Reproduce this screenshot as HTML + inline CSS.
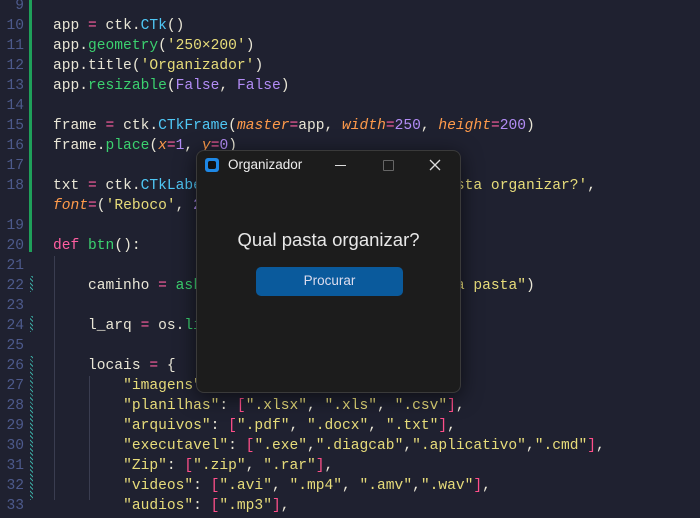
<!DOCTYPE html>
<html><head><meta charset="utf-8"><style>
html,body{margin:0;padding:0;width:700px;height:500px;overflow:hidden;background:#1f2130;}
.l{position:absolute;left:0;height:20px;line-height:20px;font:14.6px "Liberation Mono","DejaVu Sans Mono",monospace;color:#e9e6d6;white-space:pre;margin-top:4px;}
.n{position:absolute;left:0;width:24px;text-align:right;color:#4d5a8c;font-size:14.6px;}
.c{position:absolute;left:53px;}
.k{color:#ff5ea0}.f{color:#3bd16f}.cl{color:#4fc7f5}.p{color:#b28cf5}.o{color:#ff9a4a;font-style:italic}.s{color:#e7dc7a}.b{color:#ff4f8a}
.win{position:absolute;left:196px;top:150px;width:263px;height:241px;background:#1c1c1c;border:1px solid #3a3a3a;border-radius:8px;box-shadow:0 4px 20px rgba(0,0,0,.6);font-family:"Liberation Sans",sans-serif;}
</style></head><body>
<div style="position:absolute;left:29px;top:0;width:3px;height:252px;background:#1fa05a"></div>
<div style="position:absolute;left:30px;top:276px;width:3px;height:16px;background:repeating-linear-gradient(45deg,#3aa8a0 0 1px,transparent 1px 3px)"></div>
<div style="position:absolute;left:30px;top:316px;width:3px;height:16px;background:repeating-linear-gradient(45deg,#3aa8a0 0 1px,transparent 1px 3px)"></div>
<div style="position:absolute;left:30px;top:356px;width:3px;height:144px;background:repeating-linear-gradient(45deg,#3aa8a0 0 1px,transparent 1px 3px)"></div>
<div style="position:absolute;left:54px;top:256px;width:1px;height:244px;background:#3a3d50"></div>
<div style="position:absolute;left:89px;top:376px;width:1px;height:124px;background:#3a3d50"></div>

<div class="l" style="top:-6px"><span class="n">9</span></div>
<div class="l" style="top:14px"><span class="n">10</span><span class="c">app <span class="k">=</span> ctk.<span class="cl">CTk</span>()</span></div>
<div class="l" style="top:34px"><span class="n">11</span><span class="c">app.<span class="f">geometry</span>(<span class="s">'250×200'</span>)</span></div>
<div class="l" style="top:54px"><span class="n">12</span><span class="c">app.title(<span class="s">'Organizador'</span>)</span></div>
<div class="l" style="top:74px"><span class="n">13</span><span class="c">app.<span class="f">resizable</span>(<span class="p">False</span>, <span class="p">False</span>)</span></div>
<div class="l" style="top:94px"><span class="n">14</span></div>
<div class="l" style="top:114px"><span class="n">15</span><span class="c">frame <span class="k">=</span> ctk.<span class="cl">CTkFrame</span>(<span class="o">master</span><span class="k">=</span>app, <span class="o">width</span><span class="k">=</span><span class="p">250</span>, <span class="o">height</span><span class="k">=</span><span class="p">200</span>)</span></div>
<div class="l" style="top:134px"><span class="n">16</span><span class="c">frame.<span class="f">place</span>(<span class="o">x</span><span class="k">=</span><span class="p">1</span>, <span class="o">y</span><span class="k">=</span><span class="p">0</span>)</span></div>
<div class="l" style="top:154px"><span class="n">17</span></div>
<div class="l" style="top:174px"><span class="n">18</span><span class="c">txt <span class="k">=</span> ctk.<span class="cl">CTkLabel</span>(<span class="o">master</span><span class="k">=</span>frame, <span class="o">text</span><span class="k">=</span><span class="s">'Qual pasta organizar?'</span>,</span></div>
<div class="l" style="top:194px"><span class="c"><span class="o">font</span><span class="k">=</span>(<span class="s">'Reboco'</span>, <span class="p">20</span>))</span></div>
<div class="l" style="top:214px"><span class="n">19</span></div>
<div class="l" style="top:234px"><span class="n">20</span><span class="c"><span class="k">def</span> <span class="f">btn</span>():</span></div>
<div class="l" style="top:254px"><span class="n">21</span></div>
<div class="l" style="top:274px"><span class="n">22</span><span class="c">    caminho <span class="k">=</span> <span class="f">askdirectory</span>(<span class="o">title</span><span class="k">=</span><span class="s">"Selecione uma pasta"</span>)</span></div>
<div class="l" style="top:294px"><span class="n">23</span></div>
<div class="l" style="top:314px"><span class="n">24</span><span class="c">    l_arq <span class="k">=</span> os.<span class="f">listdir</span>(caminho)</span></div>
<div class="l" style="top:334px"><span class="n">25</span></div>
<div class="l" style="top:354px"><span class="n">26</span><span class="c">    locais <span class="k">=</span> {</span></div>
<div class="l" style="top:374px"><span class="n">27</span><span class="c">        <span class="s">"imagens"</span>: <span class="b">[</span><span class="s">".png"</span>, <span class="s">".jpg"</span><span class="b">]</span>,</span></div>
<div class="l" style="top:394px"><span class="n">28</span><span class="c">        <span class="s">"planilhas"</span>: <span class="b">[</span><span class="s">".xlsx"</span>, <span class="s">".xls"</span>, <span class="s">".csv"</span><span class="b">]</span>,</span></div>
<div class="l" style="top:414px"><span class="n">29</span><span class="c">        <span class="s">"arquivos"</span>: <span class="b">[</span><span class="s">".pdf"</span>, <span class="s">".docx"</span>, <span class="s">".txt"</span><span class="b">]</span>,</span></div>
<div class="l" style="top:434px"><span class="n">30</span><span class="c">        <span class="s">"executavel"</span>: <span class="b">[</span><span class="s">".exe"</span>,<span class="s">".diagcab"</span>,<span class="s">".aplicativo"</span>,<span class="s">".cmd"</span><span class="b">]</span>,</span></div>
<div class="l" style="top:454px"><span class="n">31</span><span class="c">        <span class="s">"Zip"</span>: <span class="b">[</span><span class="s">".zip"</span>, <span class="s">".rar"</span><span class="b">]</span>,</span></div>
<div class="l" style="top:474px"><span class="n">32</span><span class="c">        <span class="s">"videos"</span>: <span class="b">[</span><span class="s">".avi"</span>, <span class="s">".mp4"</span>, <span class="s">".amv"</span>,<span class="s">".wav"</span><span class="b">]</span>,</span></div>
<div class="l" style="top:494px"><span class="n">33</span><span class="c">        <span class="s">"audios"</span>: <span class="b">[</span><span class="s">".mp3"</span><span class="b">]</span>,</span></div>

<div class="win">
  <div style="position:absolute;left:8px;top:7px;width:14px;height:14px;background:#1e88e5;border-radius:3px"><div style="position:absolute;left:3px;top:3px;width:8px;height:8px;background:#111;border-radius:2px"></div></div>
  <div style="position:absolute;left:31px;top:6px;font-size:13.5px;color:#eee">Organizador</div>
  <div style="position:absolute;left:138px;top:14px;width:11px;height:1px;background:#ddd"></div>
  <div style="position:absolute;left:186px;top:9px;width:9px;height:9px;border:1px solid #666;border-radius:1px"></div>
  <svg style="position:absolute;left:232px;top:8px" width="12" height="12"><path d="M1 1L11 11M11 1L1 11" stroke="#ddd" stroke-width="1.3"/></svg>
  <div style="position:absolute;left:0;width:263px;top:78px;text-align:center;font-size:18.5px;color:#e8e8e8">Qual pasta organizar?</div>
  <div style="position:absolute;left:59px;top:116px;width:147px;height:29px;background:#0a5a9c;border-radius:5px;color:#dde;font-size:13.5px;text-align:center;line-height:28px">Procurar</div>
</div>
</body></html>
